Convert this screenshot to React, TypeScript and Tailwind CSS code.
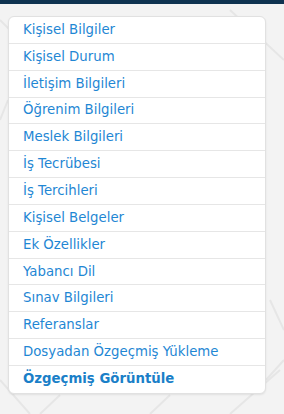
const items = [
  'Kişisel Bilgiler',
  'Kişisel Durum',
  'İletişim Bilgileri',
  'Öğrenim Bilgileri',
  'Meslek Bilgileri',
  'İş Tecrübesi',
  'İş Tercihleri',
  'Kişisel Belgeler',
  'Ek Özellikler',
  'Yabancı Dil',
  'Sınav Bilgileri',
  'Referanslar',
  'Dosyadan Özgeçmiş Yükleme',
]

export default function App() {
  return (
    <div className="relative min-h-[414px] w-[284px] overflow-hidden bg-[#f3f3f3] font-['DejaVu_Sans',Verdana,sans-serif]">
      <svg className="absolute inset-0 h-full w-full" viewBox="0 0 284 414" fill="none">
        <g stroke="#e6e6e6" strokeWidth="2">
          <path d="M0 20 L40 60 M284 60 L230 10 M270 300 L284 330 M266 380 L284 360 M230 414 L280 370 M0 380 L30 414 M0 120 L8 100 M40 414 L60 395 M150 414 L170 395" />
        </g>
      </svg>
      <div className="h-1 bg-[#0f3350]" />
      <div className="relative mx-2 mt-3 w-[258px] rounded-md border border-[#e1e1e1] bg-white shadow-[0_1px_2px_rgba(0,0,0,0.08)]">
        <ul>
          {items.map((label) => (
            <li
              key={label}
              className="flex h-[26.85px] items-center border-b border-[#e6e6e6] pl-[14px] text-[13.3px] text-[#1f87d4]"
            >
              {label}
            </li>
          ))}
          <li className="flex h-[26.85px] items-center pl-[14px] text-[13.3px] font-bold text-[#1a7fc8]">
            Özgeçmiş Görüntüle
          </li>
        </ul>
      </div>
    </div>
  )
}
